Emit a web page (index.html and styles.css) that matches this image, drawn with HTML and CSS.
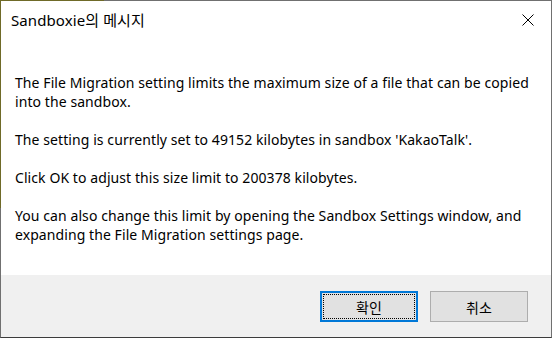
FILE: index.html
```html
<!DOCTYPE html>
<html lang="ko">
<head>
    <meta charset="UTF-8">
    <title>Sandboxie의 메시지</title>
    <link rel="stylesheet" href="styles.css">
</head>
<body>
    <div class="dialog">
        <div class="titlebar">
            <span class="title">Sandboxie의 메시지</span>
            <button class="close-btn" aria-label="닫기">
                <svg width="12" height="12" viewBox="0 0 12 12"><path d="M0.5 0.5 L11.5 11.5 M11.5 0.5 L0.5 11.5" stroke="#000" stroke-width="1" fill="none"/></svg>
            </button>
        </div>

        <div class="message">
            <p>The File Migration setting limits the maximum size of a file that can be copied into the sandbox.</p>
            <p>The setting is currently set to 49152 kilobytes in sandbox 'KakaoTalk'.</p>
            <p>Click OK to adjust this size limit to 200378 kilobytes.</p>
            <p>You can also change this limit by opening the Sandbox Settings window, and expanding the File Migration settings page.</p>
        </div>

        <div class="footer">
            <button class="btn default"><span class="focus">확인</span></button>
            <button class="btn">취소</button>
        </div>
    </div>
</body>
</html>
```

FILE: styles.css
```css
body { margin: 0; background: #fff; font-family: "Noto Sans", "Noto Sans CJK KR", sans-serif; }
.dialog {
    position: relative;
    width: 552px;
    height: 338px;
    box-sizing: border-box;
    border: 1px solid #707070;
    border-bottom-color: #3c3c3c;
    display: flex;
    flex-direction: column;
    background: #fff;
}
/* active window accent on the top-left edge */
.dialog::before { content: ""; position: absolute; left: -1px; top: -1px; width: 104px; height: 1px; background: #6f6a28; }
.dialog::after { content: ""; position: absolute; left: -1px; top: -1px; width: 1px; height: 208px; background: #6f6a28; }

.titlebar { height: 38px; display: flex; align-items: center; justify-content: space-between; padding: 0 0 0 10px; }
.title { font-size: 15px; color: #000; margin-top: -1px; letter-spacing: 0.1px; }
.close-btn { width: 46px; height: 38px; border: none; background: transparent; padding: 0; display: flex; align-items: center; justify-content: center; }

.message { flex: 1; padding: 34px 12px 0 14px; font-size: 14px; letter-spacing: 0.08px; color: #000; line-height: 19px; }
.message p { margin: 0 0 19px; }

.footer { height: 62px; background: #f0f0f0; display: flex; justify-content: flex-end; align-items: flex-start; gap: 12px; padding: 16px 23px 0 0; box-sizing: border-box; }
.btn {
    width: 98px;
    height: 31px;
    box-sizing: border-box;
    border: 1px solid #adadad;
    background: #e1e1e1;
    font-family: "Noto Sans CJK KR", sans-serif;
    font-size: 14px;
    color: #000;
    padding: 0;
    display: flex;
    align-items: center;
    justify-content: center;
}
.btn.default { border: 2px solid #0078d7; padding: 1px; }
.focus { width: 100%; height: 100%; box-sizing: border-box; border: 1px dotted #000; display: flex; align-items: center; justify-content: center; }
```
